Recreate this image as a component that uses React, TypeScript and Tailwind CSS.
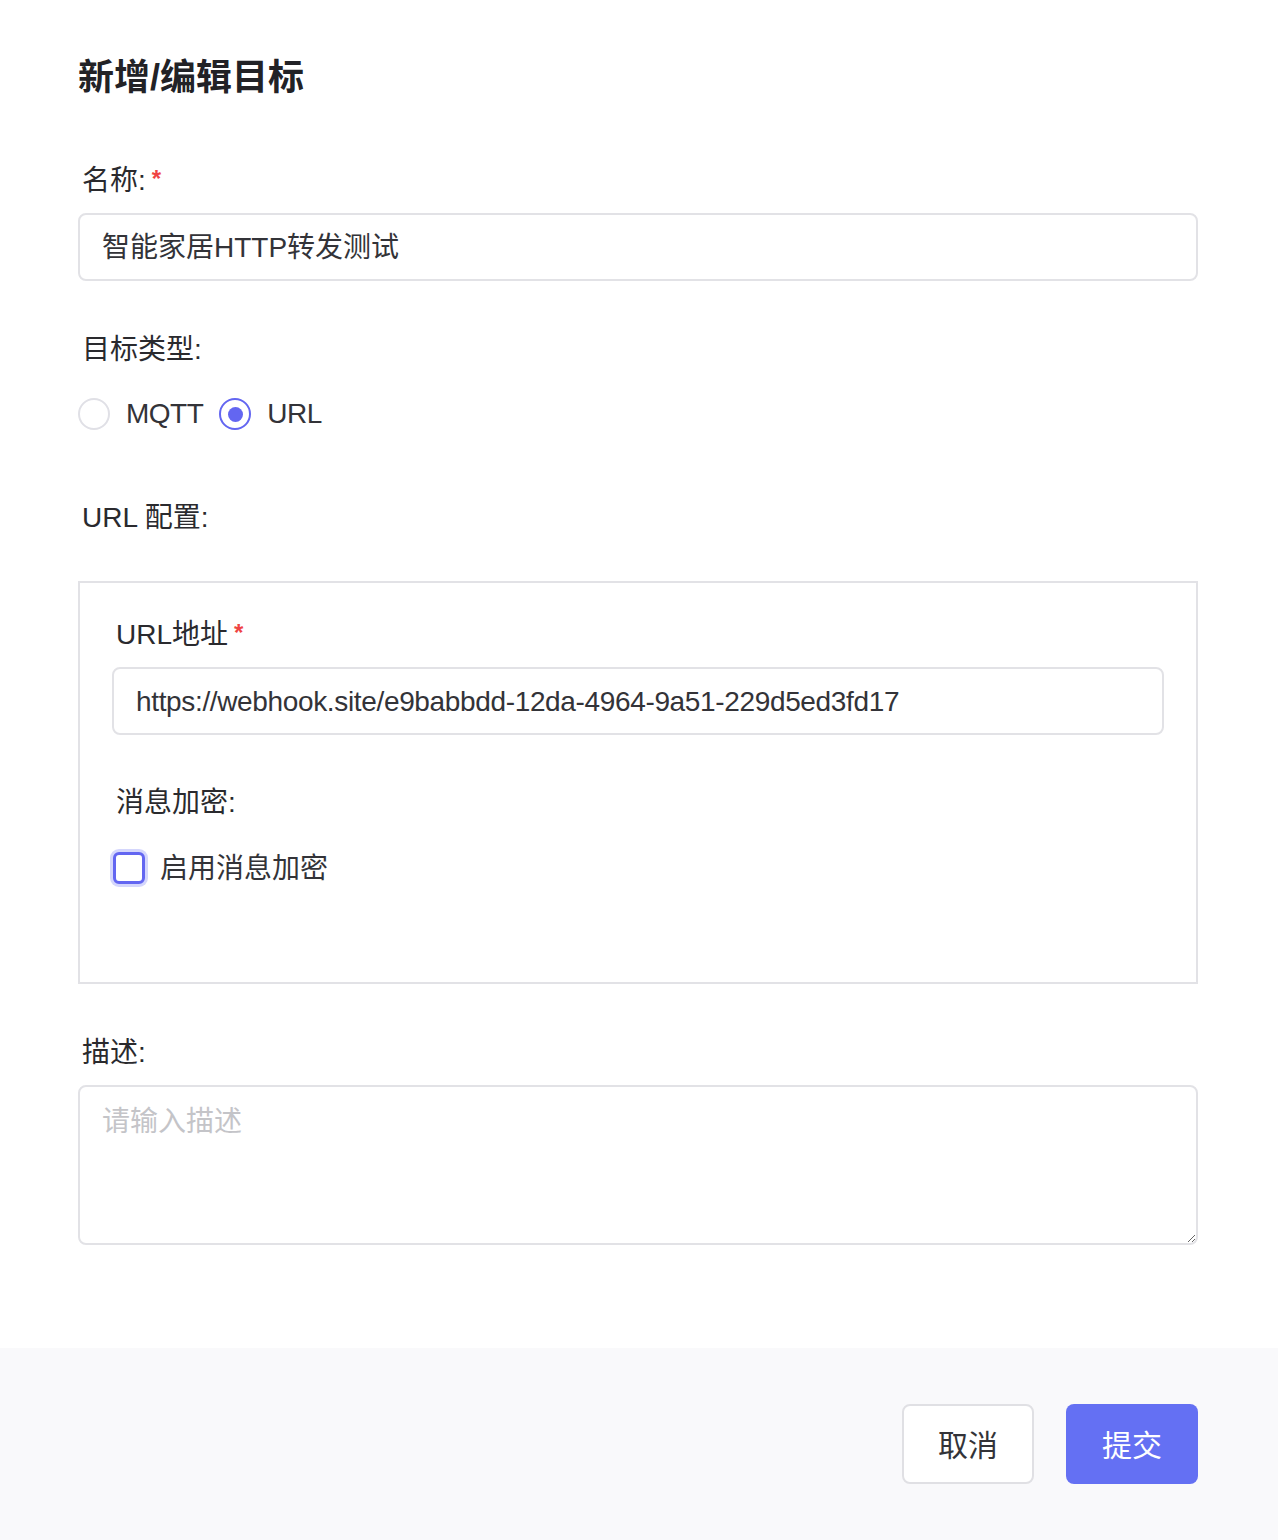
import React from "react";

const font = { fontFamily: '"Liberation Sans", "Noto Sans CJK SC", sans-serif' };

function Label({ children, required }: { children: React.ReactNode; required?: boolean }) {
  return (
    <div className="flex items-center text-[28px] leading-[40px] text-[#2a2a2e] pl-[4px] pt-[3px] -mb-[3px]">
      <span>{children}</span>
      {required && <span className="ml-[6px] text-[#ef4444] text-[24px] leading-none -mt-[4px] font-bold">*</span>}
    </div>
  );
}

export default function App() {
  return (
    <div style={font} className="w-[1278px] min-h-[1540px] bg-white flex flex-col">
      <div className="pl-[78px] pr-[80px] flex-1">
        <h1 className="mt-[50px] text-[36px] leading-[56px] font-bold text-[#222226]">新增/编辑目标</h1>

        <div className="mt-[52px]">
          <Label required>名称:</Label>
          <div className="mt-[15px] h-[68px] border-2 border-[#e2e2e6] rounded-[8px] flex items-center px-[22px] pt-[2px] text-[28px] text-[#333338]">
            智能家居HTTP转发测试
          </div>
        </div>

        <div className="mt-[46px]">
          <Label>目标类型:</Label>
          <div className="mt-[27px] h-[40px] flex items-center text-[28px] text-[#333338] tracking-[-0.5px]">
            <span className="w-[32px] h-[32px] rounded-full border-2 border-[#e0e0e6] bg-white" />
            <span className="ml-[16px]">MQTT</span>
            <span className="ml-[16px] w-[32px] h-[32px] rounded-full border-2 border-[#6366f1] flex items-center justify-center">
              <span className="w-[15px] h-[15px] rounded-full bg-[#6366f1]" />
            </span>
            <span className="ml-[16px]">URL</span>
          </div>
        </div>

        <div className="mt-[61px]">
          <Label>URL 配置:</Label>
        </div>

        <div className="mt-[46px] border-2 border-[#e2e2e6] px-[32px] pt-[29px] pb-[94px]">
          <Label required>URL地址</Label>
          <div className="mt-[15px] h-[68px] border-2 border-[#e2e2e6] rounded-[8px] flex items-center px-[22px] pt-[2px] text-[28px] text-[#333338] tracking-[-0.35px]">
            https://webhook.site/e9babbdd-12da-4964-9a51-229d5ed3fd17
          </div>
          <div className="mt-[45px]">
            <Label>消息加密:</Label>
          </div>
          <div className="mt-[28px] h-[40px] flex items-center text-[28px] text-[#333338]">
            <span className="w-[38px] h-[38px] rounded-[9px] bg-[#d4d6fc] flex items-center justify-center -ml-[2px]">
              <span className="w-[32px] h-[32px] rounded-[6px] border-[3px] border-[#6366f1] bg-white" />
            </span>
            <span className="ml-[12px] pt-[2px]">启用消息加密</span>
          </div>
        </div>

        <div className="mt-[46px]">
          <Label>描述:</Label>
          <textarea
            placeholder="请输入描述"
            style={font}
            className="mt-[15px] block w-full h-[160px] border-2 border-[#e2e2e6] rounded-[8px] px-[22px] py-[15px] text-[28px] leading-[40px] text-[#333338] placeholder:text-[#c4c4c8] outline-none resize-y"
          />
        </div>
      </div>

      <div className="mt-[103px] h-[192px] bg-[#f9f9fb] flex items-center justify-end gap-[32px] pr-[80px]">
        <button className="w-[132px] h-[80px] rounded-[8px] border-2 border-[#e0e0e4] bg-white text-[30px] text-[#333338] pt-[2px]">取消</button>
        <button className="w-[132px] h-[80px] rounded-[8px] bg-[#6470f3] text-[30px] text-white pt-[2px]">提交</button>
      </div>
    </div>
  );
}
